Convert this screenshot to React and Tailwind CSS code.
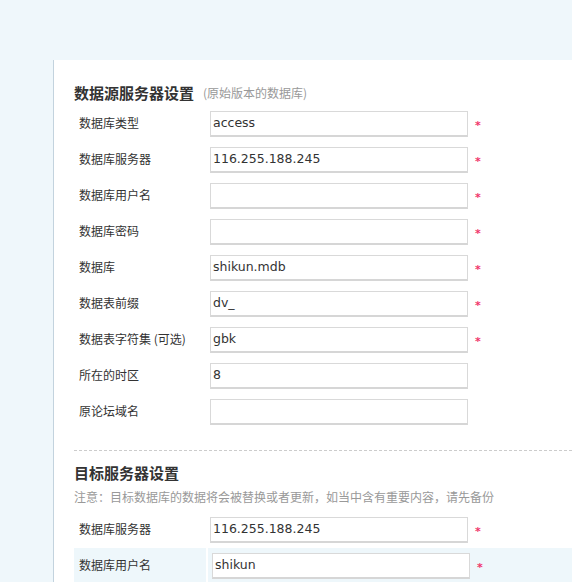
import React from "react";

const cjk = { fontFamily: '"Noto Sans CJK SC", "DejaVu Sans", sans-serif' };
const latin = { fontFamily: '"DejaVu Sans", "Noto Sans CJK SC", sans-serif' };

function Row({ label, value, required, highlight }) {
  return (
    <div className={"flex h-[36px] gap-x-[2px] " + (highlight ? "bg-[#eef7fb]" : "")}>
      <div className="w-[130px] shrink-0 pl-[5px] pb-[3px] flex items-center text-[12px] text-[#333]" style={cjk}>
        {label}
      </div>
      <div className={"flex-1 flex items-center pl-[4px] " + (highlight ? "border-l-2 border-white" : "")}>
        <div
          className="w-[258px] h-[26px] border border-[#d9d9d9] border-b-2 border-b-[#d6d6d6] bg-white flex items-center pl-[2px] text-[12.5px] text-[#333]"
          style={latin}
        >
          {value}
        </div>
        {required && (
          <span className="ml-[7px] text-[11px] font-bold leading-none text-[#f0356b] pt-[3px]" style={latin}>
            *
          </span>
        )}
      </div>
    </div>
  );
}

export default function App() {
  const src = [
    ["数据库类型", "access", true],
    ["数据库服务器", "116.255.188.245", true],
    ["数据库用户名", "", true],
    ["数据库密码", "", true],
    ["数据库", "shikun.mdb", true],
    ["数据表前缀", "dv_", true],
    ["数据表字符集 (可选)", "gbk", true],
    ["所在的时区", "8", false],
    ["原论坛域名", "", false],
  ];
  return (
    <div className="w-[572px] h-[582px] overflow-hidden bg-[#eff7fb]" style={cjk}>
      <div className="h-[60px]" />
      <div className="ml-[53px] bg-white border-l border-[#c3d3de] h-[560px] pl-[20px]">
        <div className="pt-[23px] h-[43px] flex items-center">
          <span className="text-[15px] font-bold text-[#333] leading-[20px]">数据源服务器设置</span>
          <span className="ml-[9px] text-[12px] text-[#999] leading-[20px]">(原始版本的数据库)</span>
        </div>
        <div className="h-[3px]" />
        <div>
          {src.map(([l, v, r]) => (
            <Row key={l} label={l} value={v} required={r} />
          ))}
        </div>
        <div className="mt-[20px] border-t border-dashed border-[#cccccc]" />
        <div className="mt-[12px] h-[20px] flex items-center text-[15px] font-bold text-[#333]">目标服务器设置</div>
        <div className="mt-[5px] h-[18px] flex items-center text-[12px] text-[#999]">
          注意：目标数据库的数据将会被替换或者更新，如当中含有重要内容，请先备份
        </div>
        <div className="h-[6px]" />
        <Row label="数据库服务器" value="116.255.188.245" required />
        <Row label="数据库用户名" value="shikun" required highlight />
      </div>
    </div>
  );
}
